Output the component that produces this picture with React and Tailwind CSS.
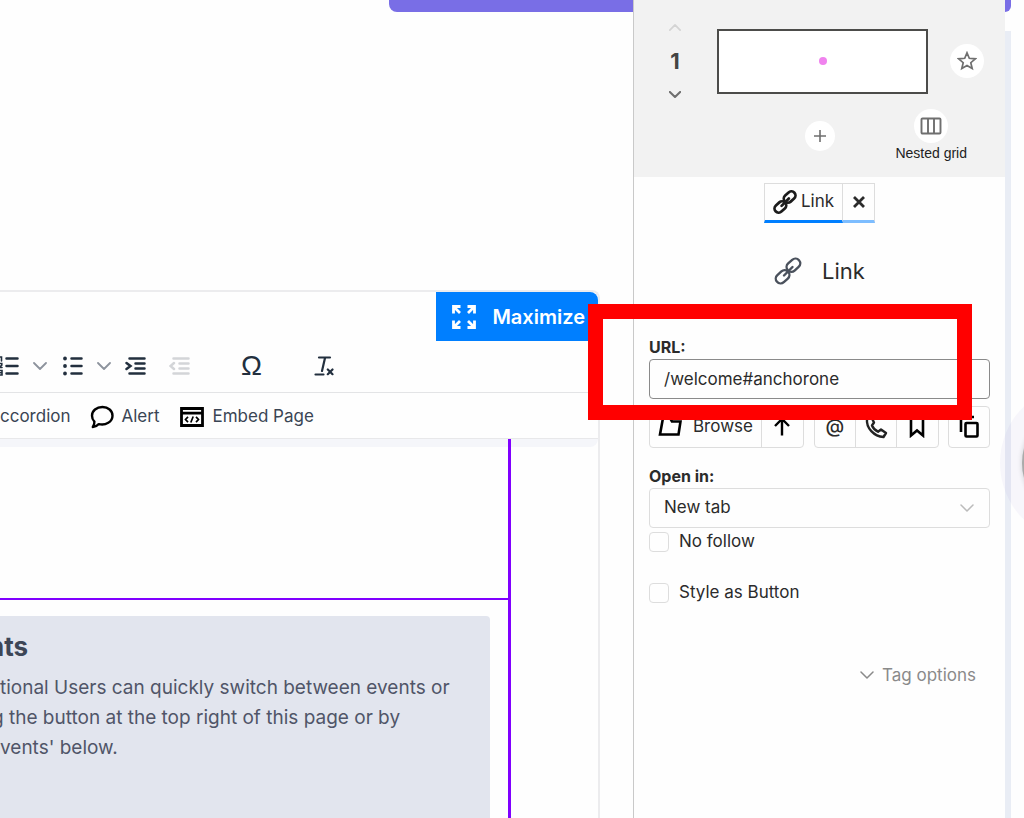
import { useState } from "react";

function ChevronDown({ className, width = 2 }) {
  return (
    <svg
      viewBox="0 0 14 8"
      fill="none"
      stroke="currentColor"
      strokeWidth={width}
      strokeLinecap="round"
      strokeLinejoin="round"
      className={className}
    >
      <path d="M1 1l6 6 6-6" />
    </svg>
  );
}

function ChainIcon({ className, width = 2.4 }) {
  return (
    <svg
      viewBox="0 0 28 28"
      fill="none"
      stroke="currentColor"
      strokeWidth={width}
      strokeLinecap="round"
      className={className}
    >
      <rect x="-7.5" y="-4.8" width="15" height="9.6" rx="4.8" transform="translate(19.4 8.2) rotate(-42)" />
      <rect x="-7.5" y="-4.8" width="15" height="9.6" rx="4.8" transform="translate(8.6 19.8) rotate(-42)" />
      <path d="M10 18.500l8.500-8.500" />
    </svg>
  );
}

function OrderedListIcon() {
  return (
    <svg viewBox="0 0 22 20" className="h-5 w-[22px]" fill="none" stroke="currentColor" strokeLinecap="round">
      <path strokeWidth="2.5" d="M9.500 2.500h11M9.500 10h11M9.500 17.500h11" />
      <path strokeWidth="1.6" d="M3 1h1.500v4M2 7.500h2.800v1.600L2.200 11.500h2.800M2 14.500h3v4.500H2M3 16.700h2" />
    </svg>
  );
}

function BulletListIcon() {
  return (
    <svg viewBox="0 0 20 20" className="size-5" fill="none" stroke="currentColor" strokeLinecap="round">
      <path strokeWidth="2.5" d="M8.500 2.500h10M8.500 10h10M8.500 17.500h10" />
      <path strokeWidth="3.800" d="M2 2.500h.01M2 10h.01M2 17.500h.01" />
    </svg>
  );
}

function IndentIcon({ outdent }) {
  return (
    <svg viewBox="0 0 22 20" className="h-5 w-[22px]" fill="none" stroke="currentColor" strokeWidth="2.5" strokeLinecap="round">
      <path d="M4.500 2.500h15M10.500 7.500h9M10.500 12.500h9M4.500 17.500h15" />
      <path d={outdent ? "M5 7L1.500 10 5 13" : "M1.500 7L5.500 10l-4 3"} />
    </svg>
  );
}

function ClearFormatIcon() {
  return (
    <svg viewBox="0 0 20 20" className="size-5" fill="none" stroke="currentColor" strokeWidth="2.200" strokeLinecap="round">
      <path d="M5 1.500h11M11 2L8 15M1.500 18.500h8M13.800 13.500l4.700 4.700M18.500 13.500l-4.700 4.700" />
    </svg>
  );
}

function SpeechIcon() {
  return (
    <svg viewBox="0 0 24 24" className="size-6 text-black" fill="none" stroke="currentColor" strokeWidth="2.400" strokeLinejoin="round">
      <path d="M12.500 2C6.500 2 2 5.800 2 10.700c0 2.500.9 4.400 2.400 5.900.1 2.200-.6 3.900-1.600 5.400 2.600-.2 4.700-1.300 6-2.900 6.900 1.700 13.700-2.300 13.700-8.400C22.500 5.800 18.200 2 12.500 2z" />
    </svg>
  );
}

function EmbedIcon() {
  return (
    <svg viewBox="0 0 24 20" className="h-5 w-6 text-black" fill="none" stroke="currentColor" strokeWidth="2.800">
      <path d="M1.500 1.500h21v17h-21zM1 6.200h22" />
      <path strokeWidth="1.700" d="M8 9.800l-2.500 2.700L8 15.200M16 9.800l2.500 2.700-2.500 2.700M13.200 9.500l-2.400 6" />
    </svg>
  );
}

function MaximizeIcon() {
  return (
    <svg viewBox="0 0 24 24" className="size-6" fill="none" stroke="currentColor" strokeWidth="2.800">
      <path d="M1.500 8.500v-7h7M1.500 1.500L8 8M15.500 1.500h7v7M22.500 1.500L16 8M1.500 15.500v7h7M1.500 22.500L8 16M22.500 15.500v7h-7M22.500 22.500L16 16" />
    </svg>
  );
}

function Toolbar() {
  return (
    <div className="flex h-[51px] items-center pb-0.5 text-[#222f3e]">
      <button aria-label="Numbered list" className="-ml-[3px]">
        <OrderedListIcon />
      </button>
      <button aria-label="Numbered list options" className="ml-[14px] text-[#8d939d]">
        <ChevronDown className="h-2 w-[14px]" width={1.8} />
      </button>
      <button aria-label="Bullet list" className="ml-4">
        <BulletListIcon />
      </button>
      <button aria-label="Bullet list options" className="ml-[14px] text-[#8d939d]">
        <ChevronDown className="h-2 w-[14px]" width={1.8} />
      </button>
      <button aria-label="Increase indent" className="ml-[14px]">
        <IndentIcon />
      </button>
      <button aria-label="Decrease indent" className="ml-[22px] text-[#d3d5d8]" disabled>
        <IndentIcon outdent />
      </button>
      <button className="ml-[50px] font-['Liberation_Sans',sans-serif] text-[28px] leading-7" aria-label="Special character">
        Ω
      </button>
      <button aria-label="Clear formatting" className="ml-[52px]">
        <ClearFormatIcon />
      </button>
    </div>
  );
}

function Editor() {
  return (
    <section className="mr-[33px] flex flex-1 flex-col rounded-tr-lg border-t-2 border-r-2 border-[#ececee]">
      <div className="rounded-br-lg border-b-8 border-[#f5f6fa] text-[#222f3e]">
        <div className="border-b border-[#e3e4e6]">
          <div className="flex justify-end">
            <button className="flex h-[49px] items-center gap-4 rounded-tr-lg bg-[#007fff] pr-[13px] pl-4 text-[20px] font-semibold text-white">
              <MaximizeIcon />
              Maximize
            </button>
          </div>
          <Toolbar />
        </div>
        <div className="flex h-[46px] items-center gap-[19px] border-b border-[#e8e8ea] pt-0.5 text-[17px] text-[#3a4554]">
          <button>ccordion</button>
          <button className="flex items-center gap-2">
            <SpeechIcon />
            Alert
          </button>
          <button className="ml-0.5 flex items-center gap-2">
            <EmbedIcon />
            Embed Page
          </button>
        </div>
      </div>
      <div className="-mt-2 mr-[87px] flex flex-1 flex-col border-r-3 border-[#8000ff]">
        <div className="h-[161px] border-b-2 border-[#8000ff]" />
        <article className="mt-4 mr-[18px] flex-1 overflow-hidden rounded-tr bg-[#e2e5ee] pt-[13px] whitespace-nowrap">
          <h2 className="-ml-3 text-[26px] leading-9 font-bold text-[#3d4656]">nts</h2>
          <div className="mt-2 -ml-2 text-[19px] leading-[30px] text-[#505568]">
            <p className="pl-2">tional Users can quickly switch between events or</p>
            <p>g the button at the top right of this page or by</p>
            <p className="pl-2">vents&#39; below.</p>
          </div>
        </article>
      </div>
    </section>
  );
}

function GridHeader() {
  return (
    <div className="h-[177px] bg-[#f2f2f2] pt-6 text-[#6f6f6f]">
      <div className="flex items-center">
        <div className="ml-[31px] flex w-5 flex-col items-center">
          <button aria-label="Move up" className="text-[#d4d4d4]">
            <ChevronDown className="h-[7px] w-3 rotate-180" />
          </button>
          <span className="my-4 text-[22px] leading-7 font-bold text-[#444]">1</span>
          <button aria-label="Move down">
            <ChevronDown className="h-[7px] w-3" width={2.4} />
          </button>
        </div>
        <div className="ml-8 flex h-[65px] flex-1 items-center justify-center border-2 border-[#4c4c4a] bg-white">
          <span className="size-2 rounded-full bg-[#f083ee]" />
        </div>
        <button aria-label="Favourite" className="mr-[21px] ml-[22px] flex size-[34px] items-center justify-center rounded-full bg-white">
          <svg viewBox="0 0 20 20" className="size-5" fill="none" stroke="currentColor" strokeWidth="1.700">
            <path d="M10 1.800l2.300 5.500 6 .5-4.500 3.900 1.400 5.800L10 14.400l-5.200 3.100 1.400-5.800-4.500-3.900 6-.5z" />
          </svg>
        </button>
      </div>
      <div className="mt-[11px] flex items-start justify-end pr-[38px]">
        <button aria-label="Add column" className="mt-3 flex size-[30px] items-center justify-center rounded-full bg-white">
          <svg viewBox="0 0 14 14" className="size-[14px]" stroke="currentColor" strokeWidth="1.600">
            <path d="M7 1v12M1 7h12" />
          </svg>
        </button>
        <button className="ml-[60px] flex flex-col items-center font-['Liberation_Sans',sans-serif] text-[14px] text-[#222]">
          <span className="flex size-[34px] items-center justify-center rounded-full bg-white text-[#6f6f6f]">
            <svg viewBox="0 0 22 18" className="h-[18px] w-[22px]" fill="none" stroke="currentColor" strokeWidth="1.900">
              <rect x="1.500" y="1.500" width="19" height="15" rx="1" />
              <path d="M8 1.500v15M14 1.500v15" />
            </svg>
          </span>
          Nested grid
        </button>
      </div>
    </div>
  );
}

function LinkPanel() {
  const [url, setUrl] = useState("/welcome#anchorone");
  const cell = "flex h-10 w-[41px] items-center justify-center";
  const group = "flex h-[42px] divide-x divide-[#ddd] rounded border border-[#ddd]";

  return (
    <aside className="relative w-[372px] shrink-0 border-l border-[#c9c9c9] bg-[#fefefe] text-[#2b2b2b]">
      <GridHeader />
      <div className="mt-[6px] flex justify-center text-[17px]">
        <button className="flex h-10 items-center gap-1 border border-b-3 border-[#ddd] border-b-[#007fff] px-2">
          <ChainIcon className="size-6 text-[#1c1c1c]" width={3.2} />
          Link
        </button>
        <button aria-label="Close" className="flex h-10 w-8 items-center justify-center border border-b-3 border-l-0 border-[#ddd] border-b-[#7dbdff]">
          <svg viewBox="0 0 12 12" className="size-3" stroke="currentColor" strokeWidth="2.800">
            <path d="M1 1l10 10M11 1L1 11" />
          </svg>
        </button>
      </div>
      <h1 className="mt-8 flex items-center justify-center gap-5 text-[22px] leading-8">
        <ChainIcon className="size-7 text-[#4a515c]" />
        Link
      </h1>
      <form className="mt-12 px-[15px] text-[17px]">
        <label htmlFor="url" className="block text-[16px] leading-6 font-bold">
          URL:
        </label>
        <input
          id="url"
          value={url}
          onChange={(e) => setUrl(e.target.value)}
          className="block h-10 w-full rounded border border-[#8a8a8a] px-[14px] text-[17px]"
        />
        <div className="mt-[7px] flex">
          <div className={group}>
            <button type="button" className="flex items-center gap-[11px] px-2">
              <svg viewBox="0 0 24 22" className="h-[22px] w-6" fill="none" stroke="black" strokeWidth="2.600">
                <path d="M2 18.500L5 2h7l2 3.500h8.500l-2 13z" />
              </svg>
              Browse
            </button>
            <button type="button" aria-label="Upload" className={cell}>
              <svg viewBox="0 0 18 20" className="h-5 w-[18px]" fill="none" stroke="black" strokeWidth="2.400">
                <path d="M9 18.500V2M2 9l7-7 7 7" />
              </svg>
            </button>
          </div>
          <div className={group + " ml-[10px]"}>
            <button type="button" aria-label="Email" className={cell + " text-[19px] font-medium"}>
              @
            </button>
            <button type="button" aria-label="Phone" className={cell}>
              <svg viewBox="0 0 24 24" className="size-6" fill="none" stroke="#222" strokeWidth="2.400" strokeLinejoin="round">
                <path d="M7.500 2.500L3 4c-1 9 7 17.500 16.500 18l2.500-4-5-3.500-3 2.200C11.500 15.500 9 13 8 10.500l2-3z" />
              </svg>
            </button>
            <button type="button" aria-label="Anchor" className={cell}>
              <svg viewBox="0 0 16 22" className="h-[22px] w-4" fill="none" stroke="black" strokeWidth="2.600">
                <path d="M2 2h12v17.500l-6-5-6 5z" />
              </svg>
            </button>
          </div>
          <div className={group + " ml-auto"}>
            <button type="button" aria-label="Copy" className="flex h-10 w-10 items-center justify-center">
              <svg viewBox="0 0 22 24" className="h-6 w-[22px]" fill="none" stroke="black" strokeWidth="2.600">
                <path d="M3 17V2h13" />
                <rect x="7.500" y="8" width="12" height="13.500" rx="1" />
              </svg>
            </button>
          </div>
        </div>
        <label htmlFor="open-in" className="mt-4 block text-[16px] leading-6 font-bold">
          Open in:
        </label>
        <div className="relative">
          <select id="open-in" className="block h-10 w-full appearance-none rounded border border-[#ddd] px-[14px]">
            <option>New tab</option>
          </select>
          <ChevronDown className="pointer-events-none absolute top-4 right-4 h-2 w-[14px] text-[#bbb]" width={1.5} />
        </div>
        <label className="flex h-7 items-center gap-[10px]">
          <input type="checkbox" className="size-5 appearance-none rounded-sm border border-[#ddd]" />
          No follow
        </label>
        <label className="mt-[23px] flex h-7 items-center gap-[10px]">
          <input type="checkbox" className="size-5 appearance-none rounded-sm border border-[#ddd]" />
          Style as Button
        </label>
        <button type="button" className="mt-[54px] mr-[14px] ml-auto flex items-center gap-2 text-[17px] leading-7 text-[#8a8a8a]">
          <ChevronDown className="h-2 w-[14px]" width={1.5} />
          Tag options
        </button>
      </form>
      <div className="pointer-events-none absolute top-[304px] right-[33px] -left-[46px] h-[116px] border-[15px] border-[#f00]" />
    </aside>
  );
}

export default function App() {
  return (
    <div className="relative flex min-h-screen overflow-hidden bg-[#fefefe] font-['Inter',sans-serif]">
      <main className="flex min-w-0 flex-1 flex-col">
        <div className="mb-[278px] ml-[389px] h-3 rounded-bl-lg bg-[#796ee6]" />
        <Editor />
      </main>
      <LinkPanel />
      <div className="flex w-[19px] shrink-0 flex-col">
        <div className="h-3 w-[6px] rounded-br-md bg-[#796ee6]" />
        <div className="mt-[19px] w-[6px] flex-1 bg-[#e9edf5]" />
      </div>
      {/* floating help bubble, mostly off the right edge */}
      <div className="absolute top-[406px] -right-[112px] size-[114px] rounded-full bg-[#aaa] shadow-[0_0_4px_1px_rgba(0,0,0,0.12),0_0_0_22px_rgba(110,90,190,0.05)]" />
    </div>
  );
}
